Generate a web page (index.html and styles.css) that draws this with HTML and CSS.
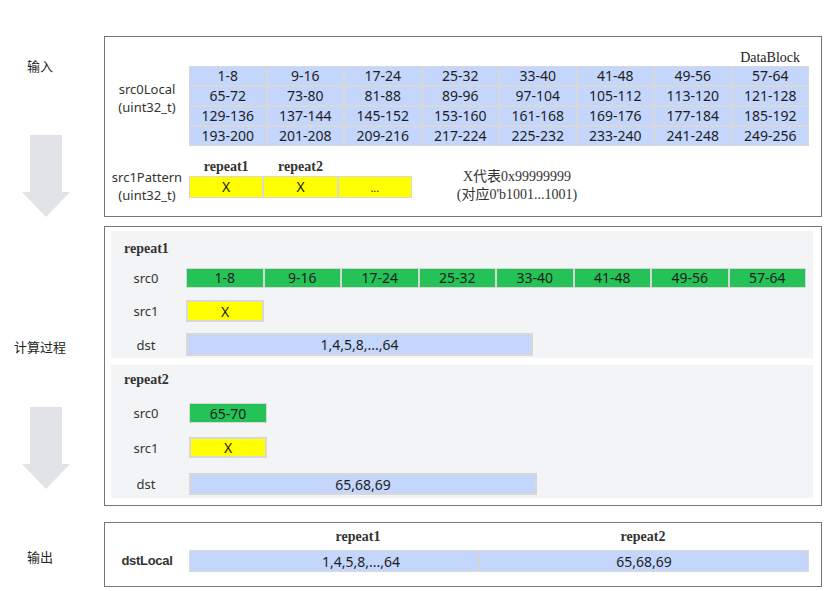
FILE: index.html
```html
<!DOCTYPE html>
<html lang="zh">
<head>
<meta charset="utf-8">
<title>DataBlock</title>
<link rel="stylesheet" href="styles.css">
</head>
<body>
<div class="page">
  <div class="side">
    <div class="side-label first">输入</div>
    <svg class="arrow arrow1" width="48" height="82" viewBox="0 0 48 82"><rect x="8" y="0" width="32" height="57" fill="#e1e3e7"/><polygon points="0,57 48,57 24,82" fill="#e1e3e7"/></svg>
    <div class="side-label second">计算过程</div>
    <svg class="arrow arrow2" width="48" height="82" viewBox="0 0 48 82"><rect x="8" y="0" width="32" height="57" fill="#e1e3e7"/><polygon points="0,57 48,57 24,82" fill="#e1e3e7"/></svg>
    <div class="side-label third">输出</div>
  </div>

  <div class="main">
    <div class="box box-input">
      <div class="datablock">DataBlock</div>
      <div class="src0-row">
        <div class="row-label">src0Local<br>(uint32_t)</div>
        <div class="grid-table">
          <div class="cell blue">1-8</div><div class="cell blue">9-16</div><div class="cell blue">17-24</div><div class="cell blue">25-32</div><div class="cell blue">33-40</div><div class="cell blue">41-48</div><div class="cell blue">49-56</div><div class="cell blue">57-64</div>
          <div class="cell blue">65-72</div><div class="cell blue">73-80</div><div class="cell blue">81-88</div><div class="cell blue">89-96</div><div class="cell blue">97-104</div><div class="cell blue">105-112</div><div class="cell blue">113-120</div><div class="cell blue">121-128</div>
          <div class="cell blue">129-136</div><div class="cell blue">137-144</div><div class="cell blue">145-152</div><div class="cell blue">153-160</div><div class="cell blue">161-168</div><div class="cell blue">169-176</div><div class="cell blue">177-184</div><div class="cell blue">185-192</div>
          <div class="cell blue">193-200</div><div class="cell blue">201-208</div><div class="cell blue">209-216</div><div class="cell blue">217-224</div><div class="cell blue">225-232</div><div class="cell blue">233-240</div><div class="cell blue">241-248</div><div class="cell blue">249-256</div>
        </div>
      </div>
      <div class="pattern-row">
        <div class="row-label pat-label">src1Pattern<br>(uint32_t)</div>
        <div class="pattern">
          <div class="pattern-head">
            <div class="rep">repeat1</div><div class="rep">repeat2</div><div class="rep"></div>
          </div>
          <div class="pattern-cells">
            <div class="cell yellow">X</div><div class="cell yellow">X</div><div class="cell yellow dots">...</div>
          </div>
        </div>
        <div class="note">X代表0x99999999<br>(对应0'b1001...1001)</div>
      </div>
    </div>

    <div class="box box-calc">
      <div class="panel panel1">
        <div class="rep panel-head">repeat1</div>
        <div class="prow r1">
          <div class="plabel">src0</div>
          <div class="green-row">
            <div class="cell green">1-8</div><div class="cell green">9-16</div><div class="cell green">17-24</div><div class="cell green">25-32</div><div class="cell green">33-40</div><div class="cell green">41-48</div><div class="cell green">49-56</div><div class="cell green">57-64</div>
          </div>
        </div>
        <div class="prow r2">
          <div class="plabel">src1</div>
          <div class="single yellow-box">X</div>
        </div>
        <div class="prow r3">
          <div class="plabel">dst</div>
          <div class="single dst-box">1,4,5,8,...,64</div>
        </div>
      </div>
      <div class="panel panel2">
        <div class="rep panel-head">repeat2</div>
        <div class="prow q1">
          <div class="plabel">src0</div>
          <div class="single green-box shift">65-70</div>
        </div>
        <div class="prow q2">
          <div class="plabel">src1</div>
          <div class="single yellow-box shift">X</div>
        </div>
        <div class="prow q3">
          <div class="plabel">dst</div>
          <div class="single dst-box shift wide">65,68,69</div>
        </div>
      </div>
    </div>

    <div class="box box-out">
      <div class="out-head">
        <div class="out-spacer"></div>
        <div class="rep out-h1">repeat1</div>
        <div class="rep out-h2">repeat2</div>
      </div>
      <div class="out-row">
        <div class="out-label">dstLocal</div>
        <div class="out-bar">
          <div class="seg seg1">1,4,5,8,...,64</div>
          <div class="seg seg2">65,68,69</div>
        </div>
      </div>
    </div>
  </div>
</div>
</body>
</html>
```

FILE: styles.css
```css
* { box-sizing: border-box; }

body {
  margin: 0;
  width: 832px;
  height: 591px;
  background: #ffffff;
  font-family: "Noto Sans", "Noto Sans CJK SC", sans-serif;
  font-size: 13px;
  color: #222222;
  overflow: hidden;
}

.page {
  display: flex;
}

/* left column */
.side {
  width: 104px;
  flex: none;
  display: flex;
  flex-direction: column;
}

.side-label {
  width: 80px;
  text-align: center;
  line-height: 18px;
  height: 18px;
  font-family: "Noto Sans CJK SC", sans-serif;
  font-size: 13px;
  color: #222;
}

.side-label.first { margin-top: 57px; }
.side-label.second { margin-top: 121px; }
.side-label.third { margin-top: 59px; }

.arrow {
  display: block;
  margin-left: 22px;
}
.arrow1 { margin-top: 60px; }
.arrow2 { margin-top: 51px; }

/* main column */
.main {
  width: 718px;
  padding-top: 36px;
  display: flex;
  flex-direction: column;
}

.box {
  border: 1px solid #767676;
  background: #ffffff;
}

/* input box */
.box-input {
  height: 181px;
  padding: 12px 12px 0 0;
}

.datablock {
  text-align: right;
  padding-right: 9px;
  font-family: "Liberation Serif", "Noto Sans CJK SC", serif;
  font-size: 14px;
  line-height: 17px;
  height: 17px;
  color: #222;
}

.src0-row {
  display: flex;
}

.row-label {
  width: 84px;
  flex: none;
  text-align: center;
  line-height: 18px;
  padding-top: 14px;
  color: #333;
}

.grid-table {
  width: 620px;
  display: grid;
  grid-template-columns: repeat(8, 1fr);
  grid-auto-rows: 18px;
  gap: 2px;
  padding: 1px;
  background: #d8d8d8;
}

.cell {
  display: flex;
  align-items: center;
  justify-content: center;
  line-height: 1;
  font-size: 14px;
  color: #1e1e1e;
  white-space: nowrap;
}

.blue { background: #c4d6fc; }
.yellow { background: #ffff00; }
.green { background: #25c257; }

.pattern-row {
  display: flex;
  margin-top: 13px;
}

.pat-label {
  padding-top: 9px;
}

.pattern {
  width: 223px;
  flex: none;
}

.pattern-head {
  display: grid;
  grid-template-columns: repeat(3, 1fr);
  height: 17px;
  padding: 0 1px;
  column-gap: 2px;
}

.rep {
  font-family: "Liberation Serif", serif;
  font-weight: bold;
  font-size: 14px;
  line-height: 16px;
  text-align: center;
  color: #333;
}

.pattern-cells {
  display: grid;
  grid-template-columns: repeat(3, 1fr);
  grid-auto-rows: 20px;
  gap: 2px;
  padding: 1px;
  background: #d8d8d8;
}

.cell.dots {
  font-size: 11px;
}

.note {
  width: 130px;
  margin-left: 40px;
  padding-top: 9px;
  text-align: center;
  font-family: "Liberation Serif", "Noto Sans CJK SC", serif;
  font-size: 14px;
  line-height: 18px;
  color: #333;
  white-space: nowrap;
}

/* calc box */
.box-calc {
  margin-top: 9px;
  height: 280px;
  padding: 4px 8px 0 6px;
  display: flex;
  flex-direction: column;
  gap: 7px;
}

.panel {
  background: #f3f4f6;
}

.panel1 {
  height: 127px;
  padding-top: 10px;
}

.panel2 {
  height: 133px;
  padding-top: 7px;
}

.panel-head {
  text-align: left;
  padding-left: 13px;
  height: 16px;
}

.prow {
  display: flex;
  align-items: center;
}

.plabel {
  width: 70px;
  flex: none;
  text-align: center;
  color: #333;
}

.r1 { margin-top: 11px; height: 20px; }
.r2 { margin-top: 12px; height: 22px; }
.r3 { margin-top: 11px; height: 23px; }

.q1 { margin-top: 15px; height: 20px; }
.q2 { margin-top: 14px; height: 21px; }
.q3 { margin-top: 15px; height: 22px; }

.green-row {
  margin-left: 5px;
  width: 620px;
  height: 20px;
  display: grid;
  grid-template-columns: repeat(8, 1fr);
  gap: 2px;
  padding: 1px;
  background: #d6d6d6;
}

.single {
  height: 100%;
  margin-left: 5px;
  display: flex;
  align-items: center;
  justify-content: center;
  border: 2px solid #d8d8d8;
  font-size: 14px;
  color: #1e1e1e;
}

.single.shift { margin-left: 8px; }

.yellow-box {
  width: 78px;
  background: #ffff00;
}

.green-box {
  width: 78px;
  background: #25c257;
  border-width: 1.5px;
}

.dst-box {
  width: 347px;
  background: #c4d6fc;
}

.dst-box.wide {
  width: 348px;
}

/* output box */
.box-out {
  margin-top: 16px;
  height: 65px;
  padding-top: 6px;
}

.out-head {
  display: flex;
  height: 16px;
}

.out-spacer {
  width: 84px;
  flex: none;
}

.out-h1 {
  width: 338px;
  flex: none;
}

.out-h2 {
  width: 232px;
  flex: none;
}

.out-row {
  display: flex;
  margin-top: 5px;
  height: 22px;
}

.out-label {
  width: 84px;
  flex: none;
  text-align: center;
  font-family: "Liberation Sans", sans-serif;
  font-weight: bold;
  font-size: 13px;
  line-height: 22px;
  letter-spacing: -0.3px;
  color: #333;
}

.out-bar {
  display: flex;
  width: 620px;
  height: 22px;
}

.seg {
  height: 22px;
  display: flex;
  align-items: center;
  justify-content: center;
  background: #c4d6fc;
  border: 1px solid #dadada;
  font-size: 14px;
  color: #1e1e1e;
}

.seg1 {
  width: 344px;
  flex: none;
}

.seg2 {
  width: 331px;
  flex: none;
  margin-left: -55px;
  border-left: 2px solid #d6d6d6;
}
```
